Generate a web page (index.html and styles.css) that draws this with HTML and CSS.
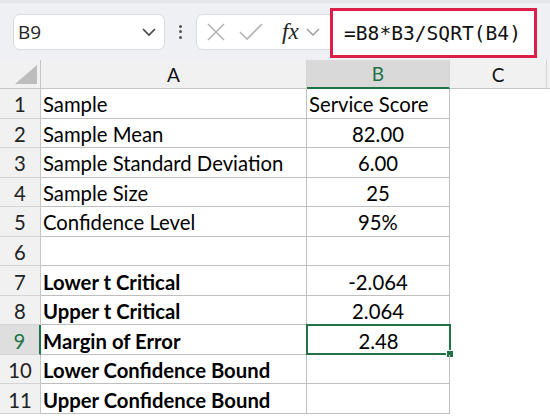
FILE: index.html
```html
<!DOCTYPE html>
<html lang="en">
<head>
    <meta charset="UTF-8">
    <title>Margin of Error</title>
    <link rel="stylesheet" href="styles.css">
</head>
<body>
    <div class="toolbar">
        <div class="name-box">
            <span>B9</span>
            <svg class="chev" width="16" height="10" viewBox="0 0 16 10"><path d="M2 2 L8 8 L14 2" fill="none" stroke="#444" stroke-width="1.6"/></svg>
        </div>
        <div class="dots"><i></i><i></i><i></i></div>
        <div class="func-box">
            <svg width="20" height="20" viewBox="0 0 20 20"><path d="M2 2 L18 18 M18 2 L2 18" stroke="#b4b4b4" stroke-width="1.6"/></svg>
            <svg width="26" height="20" viewBox="0 0 26 20"><path d="M2 10 L9 17 L24 2" fill="none" stroke="#b4b4b4" stroke-width="1.6"/></svg>
            <span class="fx">fx</span>
            <svg class="chev" width="16" height="10" viewBox="0 0 16 10"><path d="M2 2 L8 8 L14 2" fill="none" stroke="#999" stroke-width="1.4"/></svg>
        </div>
        <div class="formula">=B8*B3/SQRT(B4)</div>
    </div>

    <div class="sheet">
        <div class="corner"><span></span></div>
        <div class="col-head">A</div>
        <div class="col-head active">B</div>
        <div class="col-head">C</div>
        <div class="col-rest"></div>

        <div class="row-head">1</div><div class="cell">Sample</div><div class="cell">Service Score</div><div class="blank"></div><div class="blank"></div>
        <div class="row-head">2</div><div class="cell">Sample Mean</div><div class="cell num">82.00</div><div class="blank"></div><div class="blank"></div>
        <div class="row-head">3</div><div class="cell">Sample Standard Deviation</div><div class="cell num">6.00</div><div class="blank"></div><div class="blank"></div>
        <div class="row-head">4</div><div class="cell">Sample Size</div><div class="cell num">25</div><div class="blank"></div><div class="blank"></div>
        <div class="row-head">5</div><div class="cell">Confidence Level</div><div class="cell num">95%</div><div class="blank"></div><div class="blank"></div>
        <div class="row-head">6</div><div class="cell"></div><div class="cell"></div><div class="blank"></div><div class="blank"></div>
        <div class="row-head">7</div><div class="cell bold">Lower t Critical</div><div class="cell num">-2.064</div><div class="blank"></div><div class="blank"></div>
        <div class="row-head">8</div><div class="cell bold">Upper t Critical</div><div class="cell num">2.064</div><div class="blank"></div><div class="blank"></div>
        <div class="row-head active">9</div><div class="cell bold">Margin of Error</div><div class="cell num selected">2.48<span class="handle"></span></div><div class="blank"></div><div class="blank"></div>
        <div class="row-head">10</div><div class="cell bold">Lower Confidence Bound</div><div class="cell"></div><div class="blank"></div><div class="blank"></div>
        <div class="row-head">11</div><div class="cell bold">Upper Confidence Bound</div><div class="cell"></div><div class="blank"></div><div class="blank"></div>
    </div>
</body>
</html>
```

FILE: styles.css
```css
* {
    box-sizing: border-box;
}

body {
    margin: 0;
    width: 550px;
    height: 416px;
    overflow: hidden;
    background: #fff;
    font-family: Lato, "Noto Sans", sans-serif;
    color: #000;
}

/* Formula bar */
.toolbar {
    height: 60px;
    background: #eef0f3;
    border-top: 3px solid #e4e6e9;
    display: flex;
    align-items: center;
    padding-left: 13px;
}

.name-box {
    width: 152px;
    height: 36px;
    background: #fff;
    border: 1px solid #d9dcdf;
    border-radius: 7px;
    display: flex;
    align-items: center;
    justify-content: space-between;
    padding: 0 7px 0 4px;
    font-family: "Open Sans", sans-serif;
    font-size: 19px;
    color: #222;
}

.dots {
    width: 31px;
    display: flex;
    flex-direction: column;
    align-items: center;
    gap: 2.5px;
}

.dots i {
    width: 3px;
    height: 3px;
    background: #555;
    border-radius: 50%;
}

.func-box {
    width: 140px;
    height: 36px;
    background: #fff;
    border: 1px solid #d9dcdf;
    border-radius: 7px;
    display: flex;
    align-items: center;
    gap: 12px;
    padding-left: 9px;
}

.fx {
    font-family: "Liberation Serif", serif;
    font-style: italic;
    font-size: 23px;
    color: #222;
    margin-left: 6px;
    margin-right: -6px;
}

.formula {
    position: relative;
    margin-left: -6px;
    width: 207px;
    height: 50px;
    margin-top: 3px;
    background: #fff;
    border: 3px solid #dc1f48;
    font-family: "DejaVu Sans Mono", monospace;
    font-size: 19.6px;
    display: flex;
    align-items: center;
    padding-left: 11px;
    color: #111;
}

/* Sheet grid */
.sheet {
    display: grid;
    grid-template-columns: 41px 266px 143px 97px 1fr;
    grid-template-rows: 29px repeat(11, 29.55px);
    font-size: 20.3px;
}

.corner {
    background: #f1f1f1;
    border-right: 1px solid #c6c6c6;
    border-bottom: 1px solid #c6c6c6;
    position: relative;
}

.corner span {
    position: absolute;
    right: 3px;
    bottom: 4px;
    width: 0;
    height: 0;
    border-left: 22px solid transparent;
    border-bottom: 19px solid #bdbdbd;
}

.col-head {
    background: #f1f1f1;
    border-right: 1px solid #d4d4d4;
    border-bottom: 1px solid #c6c6c6;
    display: flex;
    align-items: center;
    justify-content: center;
    color: #111;
    font-size: 19px;
}

.col-head.active {
    background: #d9d9d9;
    color: #217346;
    border-bottom: 2px solid #217346;
}

.col-rest {
    background: #f1f1f1;
    border-bottom: 1px solid #c6c6c6;
}

.row-head {
    background: #f1f1f1;
    border-right: 1px solid #c6c6c6;
    border-bottom: 1px solid #d4d4d4;
    display: flex;
    align-items: center;
    justify-content: center;
    color: #222;
    padding-top: 2px;
}

.row-head.active {
    background: #dedede;
    color: #217346;
    border-right: 2px solid #217346;
}

.cell {
    border-right: 1px solid #bfbfbf;
    border-bottom: 1px solid #bfbfbf;
    display: flex;
    align-items: center;
    padding: 2px 0 0 2px;
    white-space: nowrap;
    position: relative;
}

.cell.num {
    justify-content: center;
    padding-left: 0;
}

.cell.bold {
    font-weight: bold;
}

.cell.selected {
    border: 2px solid #217346;
    margin: -1px -1px 0 -1px;
}

.handle {
    position: absolute;
    right: -5px;
    bottom: -5px;
    width: 8px;
    height: 8px;
    background: #217346;
    border: 1px solid #fff;
}
```
